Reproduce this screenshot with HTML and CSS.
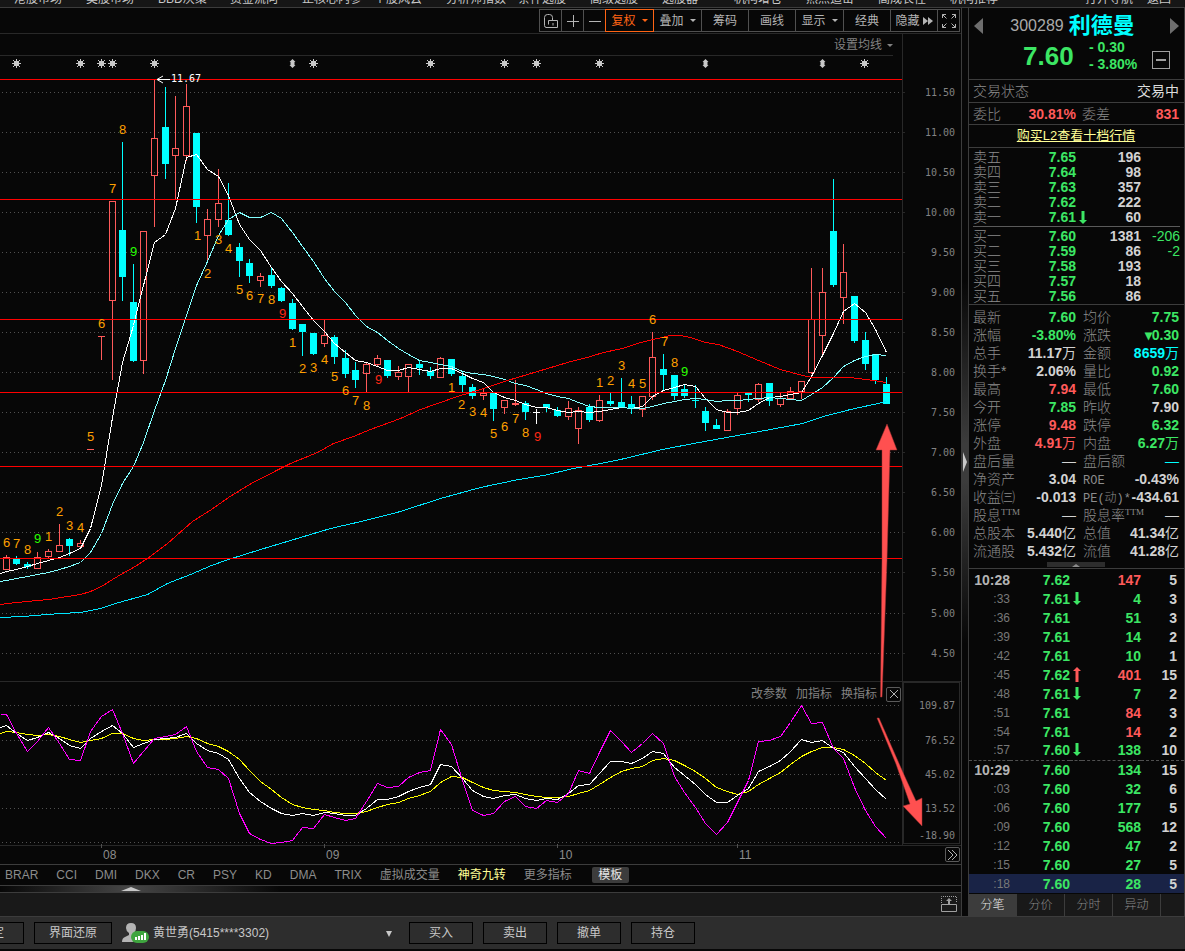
FILE: index.html
```
<!DOCTYPE html>
<html lang="zh-CN">
<head>
    <meta charset="utf-8">
    <title>利德曼 300289</title>
    <link rel="stylesheet" href="styles.css">
</head>
<body>
    <nav class="menu">
        <a href="#">港股市场</a>
        <a href="#">美股市场</a>
        <a href="#">BBD决策</a>
        <a href="#">资金流向</a>
        <a href="#">正核心内参</a>
        <a href="#">个股风云</a>
        <a href="#">分析师指数</a>
        <a href="#">条件选股</a>
        <a href="#">高级选股</a>
        <a href="#">选股器</a>
        <a href="#">机构增仓</a>
        <a href="#">热点追击</a>
        <a href="#">高成长性</a>
        <a href="#">机构推荐</a>
        <div class="menu-right">
            <a href="#">打开导航</a>
            <a href="#">返回</a>
        </div>
    </nav>

    <div class="workspace">
        <main class="left">
            <div class="toolbar">
                <button class="icon" aria-label="锁定">
                    <svg width="16" height="16"><path d="M3 14.500h11.500v-7H5.500v4M1.500 12.500V4.500q0-3 3-3h2q3 0 3 3V7M10 10v2.500M1.500 12.500q0 2 2 2"/></svg>
                </button>
                <button class="icon" aria-label="放大"><svg width="12" height="12"><path d="M0 6.500h12M6.500 0v12"/></svg></button>
                <button class="icon" aria-label="缩小"><svg width="12" height="12"><path d="M0 6.500h12"/></svg></button>
                <button class="drop active">复权<i></i></button>
                <button class="drop">叠加<i></i></button>
                <button>筹码</button>
                <button>画线</button>
                <button class="drop">显示<i></i></button>
                <button>经典</button>
                <button>隐藏<svg class="ff" width="10" height="8"><path d="M0 0l5 4l-5 4zM5 0l5 4l-5 4z"/></svg></button>
                <button class="icon" aria-label="全屏">
                    <svg width="14" height="14"><path d="M.5 4V.5H4M.5 .5l4 4M10 .5h3.500V4M13.500 .5l-4 4M.5 10v3.500H4M.5 13.500l4-4M10 13.500h3.500V10M13.500 13.500l-4-4"/></svg>
                </button>
            </div>

            <div class="chart-wrap">
                <svg id="chart" viewBox="0 33 961 831"></svg>
                <button class="ma-setting">设置均线<i></i></button>
                <div class="sub-tools">
                    <a href="#">改参数</a>
                    <a href="#">加指标</a>
                    <a href="#">换指标</a>
                    <button aria-label="关闭"><svg width="8" height="8"><path d="M0 0l8 8M8 0l-8 8"/></svg></button>
                </div>
                <button class="more-dates" aria-label="更多"><svg width="11" height="10"><path d="M1 0l5 5l-5 5M5 0l5 5l-5 5"/></svg></button>
            </div>

            <div class="indicators">
                <a href="#">BRAR</a>
                <a href="#">CCI</a>
                <a href="#">DMI</a>
                <a href="#">DKX</a>
                <a href="#">CR</a>
                <a href="#">PSY</a>
                <a href="#">KD</a>
                <a href="#">DMA</a>
                <a href="#">TRIX</a>
                <a href="#">虚拟成交量</a>
                <a href="#" class="active">神奇九转</a>
                <a href="#">更多指标</a>
                <button>模板</button>
            </div>
            <div class="fold"><svg width="20" height="4"><path d="M10 0l10 4H0z"/></svg></div>
            <div class="dock">
                <svg width="17" height="17">
                    <path d="M1.500 8.500h15v7h-15z"/>
                    <path d="M1.500 7V.5h15V7" stroke-dasharray="1 1"/>
                    <path class="solid" d="M9 2l3 3h-2v3h-2V5H6z"/>
                </svg>
            </div>
        </main>

        <div class="splitter"><svg width="4" height="20"><path d="M0 0l4 10l-4 10z"/></svg></div>

        <aside class="quote">
            <header class="stock">
                <button class="step" aria-label="上一只"><svg width="9" height="16"><path d="M9 0v16L0 8z"/></svg></button>
                <div class="stock-main">
                    <div class="stock-title"><span class="code">300289</span> <span class="name">利德曼</span></div>
                    <div class="stock-price">
                        <span class="last">7.60</span>
                        <span class="change">- 0.30<br>- 3.80%</span>
                        <button class="minus" aria-label="收起"></button>
                    </div>
                </div>
                <button class="step" aria-label="下一只"><svg width="9" height="16"><path d="M0 0v16l9-8z"/></svg></button>
            </header>
            <div class="status"><span>交易状态</span><b>交易中</b></div>
            <div class="ratio">
                <span>委比</span><strong>30.81%</strong>
                <span>委差</span><strong>831</strong>
            </div>
            <div class="level2"><a href="#">购买L2查看十档行情</a></div>
            <div class="book">
                <table id="sells"></table>
                <table id="buys"></table>
            </div>
            <div class="info">
                <table id="info"></table>
                <div class="grip"><svg width="8" height="3"><path d="M4 0l4 3H0z"/></svg></div>
            </div>
            <table id="ticks" class="ticks"></table>
            <div class="tabs">
                <button class="active">分笔</button>
                <button>分价</button>
                <button>分时</button>
                <button>异动</button>
            </div>
        </aside>
    </div>

    <footer class="trade">
        <button class="lock">锁定</button>
        <button class="restore">界面还原</button>
        <svg class="avatar" width="28" height="20">
            <path fill="#b4b4b4" d="M9 0q5 0 5 5q0 3-2 5v2l5 2q2 1 2 5H0q0-4 3-5l4-2v-2Q4 8 4 5q0-5 5-5z"/>
            <rect x="9" y="8" width="18" height="12" rx="6" fill="#3fa53f"/>
            <path fill="#fff" d="M13 14h2v3h-2zM16 13h2v4h-2zM19 12h2v5h-2zM22 10h2v7h-2z"/>
        </svg>
        <div class="account">
            <select aria-label="账户"><option>黄世勇(5415****3302)</option></select>
        </div>
        <button>买入</button>
        <button>卖出</button>
        <button>撤单</button>
        <button>持仓</button>
    </footer>
    <div class="ticker"></div>

    <script src="chart.js"></script>
    <script src="quote.js"></script>
</body>
</html>
```
FILE: styles.css
```
* {
    box-sizing: border-box;
}
body {
    margin: 0;
    background: #070707;
    color: #c8c8c8;
    font: 12px/16px "Liberation Sans", "Noto Sans CJK SC", sans-serif;
}
a {
    color: inherit;
    text-decoration: none;
}
button, select {
    font: inherit;
    color: inherit;
    background: none;
    border: 0;
    padding: 0;
}
table {
    border-collapse: collapse;
    table-layout: fixed;
    width: 100%;
}
td {
    padding: 0;
    white-space: nowrap;
}

/* top menu */
.menu {
    display: flex;
    align-items: flex-end;
    height: 8px;
    padding-left: 14px;
    background: #161616;
    border-bottom: 1px solid #3c3c3c;
    overflow: hidden;
}
.menu > a {
    flex: 0 0 72px;
    white-space: nowrap;
}
.menu-right {
    display: flex;
    gap: 14px;
    margin-left: auto;
    padding-right: 14px;
}

.workspace {
    display: flex;
}
.left {
    flex: 1;
    min-width: 0;
    display: flex;
    flex-direction: column;
    border-right: 1px solid #3c3c3c;
}

/* toolbar */
.toolbar {
    display: flex;
    justify-content: flex-end;
    height: 25px;
    padding: 1px 1px 1px 0;
}
.toolbar button {
    display: flex;
    align-items: center;
    justify-content: center;
    width: 48px;
    margin-left: -1px;
    border: 1px solid #505050;
    color: #b4b4b4;
}
.toolbar button.drop {
    width: 49px;
    gap: 6px;
}
.toolbar button.icon {
    width: 23px;
}
.toolbar button.active {
    color: #ff6414;
    border-color: #ff6414;
    z-index: 1;
}
.toolbar svg {
    fill: none;
    stroke: #b4b4b4;
}
.toolbar .ff {
    fill: #b4b4b4;
    stroke: none;
    margin-left: 3px;
}
.drop i, .ma-setting i {
    border: 3px solid transparent;
    border-top-color: currentColor;
    border-bottom: 0;
}

/* chart */
.chart-wrap {
    position: relative;
}
#chart {
    display: block;
    width: 100%;
}
#chart line, #chart polyline, #chart rect {
    shape-rendering: crispEdges;
}
#chart polyline {
    fill: none;
}
.axis {
    font: 10px "DejaVu Sans Mono", monospace;
    fill: #828282;
    text-anchor: end;
}
.date {
    font: 12px "Liberation Sans", sans-serif;
    fill: #8c8c8c;
}
.nine {
    font: 13px "Liberation Sans", sans-serif;
    text-anchor: middle;
}
.peak {
    font: 10px "DejaVu Sans Mono", monospace;
    fill: #fff;
}
.ma-setting {
    position: absolute;
    top: 4px;
    right: 68px;
    display: flex;
    align-items: center;
    gap: 5px;
    color: #828282;
}
.sub-tools {
    position: absolute;
    top: 653px;
    right: 60px;
    display: flex;
    align-items: center;
    gap: 9px;
    color: #828282;
}
.sub-tools button, .more-dates {
    display: flex;
    align-items: center;
    justify-content: center;
    width: 15px;
    height: 15px;
    border: 1px solid #5a5a5a;
    border-radius: 2px;
}
.sub-tools svg, .more-dates svg {
    fill: none;
    stroke: #b4b4b4;
}
.more-dates {
    position: absolute;
    right: 1px;
    bottom: 2px;
}

/* below the chart */
.indicators {
    display: flex;
    align-items: center;
    gap: 18px;
    height: 22px;
    padding-left: 5px;
    border-top: 1px solid #3c3c3c;
    border-bottom: 1px solid #3c3c3c;
    color: #8c8c8c;
    white-space: nowrap;
}
.indicators .active {
    color: #ffff96;
}
.indicators button {
    width: 37px;
    margin-left: 2px;
    background: #3c3c3c;
    color: #e6e6e6;
    border-radius: 2px;
}
.fold {
    height: 6px;
    padding-left: 121px;
    line-height: 0;
    background: linear-gradient(to right, #070707, #464646 130px, #070707 280px);
}
.fold svg, .splitter svg {
    fill: #c8c8c8;
}
.fold svg {
    margin-top: 1px;
}
.dock {
    display: flex;
    flex: 1;
    align-items: center;
    justify-content: flex-end;
    padding-right: 4px;
    background: #191919;
    border-top: 1px solid #3c3c3c;
}
.dock svg {
    fill: none;
    stroke: #a0a0a0;
}
.dock .solid {
    fill: #a0a0a0;
    stroke: none;
}
.splitter {
    display: flex;
    align-items: center;
    width: 6px;
    padding-left: 1px;
    background: linear-gradient(#070707 30%, #3c3c3c 48%, #3c3c3c 52%, #070707 70%);
}

/* quote panel */
.quote {
    width: 217px;
    border-left: 1px solid #3c3c3c;
    border-right: 1px solid #3c3c3c;
    font-size: 14px;
    color: #8c8c8c;
    font-weight: 300;
}
.stock {
    display: flex;
    align-items: flex-start;
    height: 72px;
    padding: 10px 5px 0;
    border-bottom: 1px solid #3c3c3c;
}
.step svg {
    display: block;
    fill: #6e6e6e;
}
.stock-main {
    flex: 1;
}
.stock-title {
    display: flex;
    justify-content: center;
    gap: 5px;
    height: 18px;
    padding-right: 8px;
    line-height: 15px;
    white-space: nowrap;
}
.code {
    font-size: 16px;
    color: #aaa;
    font-weight: 400;
}
.name {
    font-size: 22px;
    font-weight: 700;
    color: #00ffff;
}
.stock-price {
    display: flex;
    align-items: center;
    margin-top: 3px;
    padding-left: 40px;
    font-weight: 700;
    color: #3ce664;
}
.last {
    width: 66px;
    font-size: 26px;
}
.change {
    flex: 1;
    line-height: 17px;
    white-space: nowrap;
}
.minus {
    display: flex;
    align-items: center;
    justify-content: center;
    width: 18px;
    height: 18px;
    margin-top: 7px;
    border: 1px solid #a0a0a0;
}
.minus::before {
    content: "";
    width: 10px;
    height: 2px;
    background: #a0a0a0;
}
.status, .ratio, .level2 {
    display: flex;
    align-items: center;
    height: 22px;
    padding: 0 5px 0 4px;
    border-bottom: 1px solid #3c3c3c;
}
.status, .level2 {
    height: 23px;
}
.status {
    justify-content: space-between;
}
.status b {
    font-weight: 400;
    color: #dcdcdc;
}
.ratio strong {
    flex: 0 0 75px;
    font-weight: 700;
    text-align: right;
    color: #ff5a5a;
}
.ratio strong + span {
    margin-left: 6px;
}
.ratio span + strong:last-child {
    flex: 1;
}
.level2 {
    justify-content: center;
    font-size: 13px;
}
.level2 a {
    color: #ffff96;
    font-weight: 400;
    text-decoration: underline;
}
.num {
    font-weight: 700;
    text-align: right;
}
.num .unit {
    font-weight: 400;
}
.green { color: #3ce664; }
.red { color: #ff5a5a; }
.white { color: #d2d2d2; }
.cyan { color: #00ffff; }

.book {
    padding: 2px 4px 0;
    border-bottom: 1px solid #3c3c3c;
}
.book tr {
    height: 15px;
    line-height: 15px;
}
#sells {
    margin-bottom: 2px;
}
#buys {
    border-top: 2px solid #070707;
    box-shadow: 0 -1px #5a5a5a;
}
.delta {
    font-weight: 400;
    text-align: right;
}
td svg {
    display: block;
    margin-left: 3px;
    fill: currentColor;
}

.info {
    padding: 3px 5px 0 4px;
    border-bottom: 1px solid #3c3c3c;
}
.info tr {
    height: 18px;
    line-height: 18px;
}
.info td:nth-child(3) {
    padding-left: 7px;
}
.latin {
    font-family: "Liberation Mono", "Noto Sans CJK SC", monospace;
    font-size: 12px;
    line-height: 12px;
}
.info sup {
    font: 9px/0 "Liberation Serif", serif;
    vertical-align: 5px;
}
.grip {
    width: 58px;
    height: 5px;
    margin: 2px 0 1px 74px;
    background: #2d2d2d;
    text-align: center;
    line-height: 0;
}
.grip svg {
    margin-top: 1px;
    fill: #8c8c8c;
}

.ticks {
    margin-top: 1px;
}
.ticks tr {
    height: 19px;
    line-height: 18px;
}
.ticks .minute {
    color: #b4b4b4;
    font-weight: 700;
    font-size: 14px;
}
.ticks td:first-child {
    text-align: right;
}
.ticks td:last-child {
    padding-right: 7px;
    text-align: right;
    font-weight: 700;
}
.ticks .second {
    font-size: 12px;
    font-weight: 400;
    color: #787878;
}
.ticks tr.split {
    border-top: 1px dashed #505050;
}
.ticks tr.current {
    background: #192346;
}
.tabs {
    display: flex;
    height: 22px;
    margin-top: 1px;
    background: #191919;
}
.tabs button {
    width: 48px;
    border-right: 1px solid #3c3c3c;
    font-size: 12px;
}
.tabs .active {
    background: #3c3c3c;
    color: #e6e6e6;
}

/* trading bar */
.trade {
    display: flex;
    align-items: center;
    gap: 10px;
    height: 33px;
    background: #2d2d2d;
    border-top: 1px solid #3c3c3c;
    overflow: hidden;
}
.trade button {
    flex: 0 0 64px;
    height: 22px;
    border: 1px solid #000;
}
.trade .lock {
    margin-left: -40px;
}
.trade .restore {
    flex-basis: 78px;
}
.avatar {
    margin-right: -7px;
}
.account {
    position: relative;
    width: 241px;
    margin-right: 5px;
}
.account select {
    appearance: none;
    width: 100%;
}
.account::after {
    content: "";
    position: absolute;
    top: 6px;
    right: 2px;
    border: 3px solid transparent;
    border-top: 6px solid #c8c8c8;
    border-bottom: 0;
}
.ticker {
    height: 3px;
    background: #070707;
}
```
FILE: chart.js
```
const svg = document.getElementById('chart');
const RED = '#ff5a5a', CYAN = '#00ffff';
let out = '';

const barX = i => Math.floor(6 + i * 10.605);

function line(x1, y1, x2, y2, color, extra = '') {
    out += `<line x1="${x1}" y1="${y1}" x2="${x2}" y2="${y2}" stroke="${color}" ${extra}/>`;
}
function text(x, y, str, cls, color) {
    out += `<text x="${x}" y="${y}" class="${cls}"${color ? ` fill="${color}"` : ''}>${str}</text>`;
}
function curve(points, color) {
    out += `<polyline points="${points.map(p => `${p[0] + 0.5},${p[1] + 0.5}`).join(' ')}" stroke="${color}"/>`;
}
// one value per bar, the first one sits on the left edge
function series(values, color) {
    curve(values.map((y, i) => [i ? barX(i - 1) : 0, y]), color);
}

// frame
line(0, 33.5, 961, 33.5, '#282828');
line(0, 55.5, 893, 55.5, '#282828');
line(902.5, 33, 902.5, 845, '#282828');
line(0, 681.5, 961, 681.5, '#282828');
line(0, 845.5, 961, 845.5, '#282828');
out += '<rect x="903.5" y="682.5" width="56" height="161" fill="none" stroke="#282828"/>';

// price grid
[92, 132, 172, 212, 252, 292, 332, 372, 412, 452, 492, 532, 572, 613, 653].forEach((y, i) => {
    line(2, y + 0.5, 901, y + 0.5, '#505050', 'stroke-dasharray="1 3"');
    line(902, y + 0.5, 905, y + 0.5, '#282828');
    text(955, y + 4, (11.5 - i * 0.5).toFixed(2), 'axis');
});
[[705, '109.87'], [740, '76.52'], [774, '45.02'], [808, '13.52'], [842, '-18.90']].forEach(([y, label]) => {
    line(2, y + 0.5, 901, y + 0.5, '#505050', 'stroke-dasharray="1 3"');
    text(955, y === 842 ? 839 : y + 4, label, 'axis');
});
[[101, '08'], [324, '09'], [557, '10'], [737, '11']].forEach(([x, label]) => {
    line(x + 0.5, 844, x + 0.5, 848, '#505050');
    text(x + 2, 859, label, 'date');
});

// [high, body top, body bottom, low, kind]
const bars = [
    [555, 557, 569, 570, 'u'], [556, 559, 564, 565, 'd'], [562, 564, 567, 569, 'd'], [552, 557, 568, 569, 'u'],
    [549, 551, 556, 558, 'u'], [524, 545, 551, 552, 'u'], [538, 539, 546, 556, 'd'], [540, 543, 546, 547, 'u'],
    [449, 449, 449, 449, 'u'], [336, 336, 336, 360, 'u'], [201, 201, 300, 380, 'u'], [142, 230, 277, 301, 'd'],
    [264, 302, 361, 362, 'd'], [231, 231, 360, 374, 'u'], [80, 138, 175, 227, 'u'], [87, 127, 164, 179, 'd'],
    [96, 148, 155, 199, 'u'], [84, 106, 155, 161, 'u'], [133, 133, 207, 223, 'd'], [209, 219, 235, 260, 'u'],
    [169, 203, 219, 227, 'u'], [183, 220, 235, 236, 'd'], [243, 247, 261, 277, 'd'], [259, 263, 276, 283, 'd'],
    [273, 276, 280, 287, 'u'], [267, 275, 286, 288, 'd'], [287, 288, 301, 302, 'd'], [299, 303, 329, 330, 'd'],
    [324, 324, 332, 356, 'd'], [333, 333, 354, 355, 'd'], [320, 335, 343, 347, 'u'], [335, 337, 357, 364, 'd'],
    [350, 358, 374, 378, 'd'], [362, 370, 380, 388, 'd'], [363, 364, 373, 392, 'u'], [355, 358, 364, 367, 'u'],
    [360, 360, 376, 378, 'd'], [366, 372, 376, 380, 'u'], [364, 364, 376, 392, 'u'], [360, 364, 368, 375, 'd'],
    [367, 371, 376, 379, 'd'], [357, 358, 377, 378, 'u'], [359, 359, 374, 376, 'd'], [371, 376, 385, 392, 'd'],
    [384, 387, 396, 399, 'd'], [388, 393, 395, 400, 'u'], [393, 393, 409, 421, 'd'], [400, 400, 407, 414, 'u'],
    [380, 403, 404, 406, 'u'], [401, 403, 412, 420, 'd'], [409, 412, 412, 424, 'w'], [404, 404, 408, 412, 'd'],
    [407, 410, 416, 417, 'd'], [401, 408, 416, 420, 'u'], [407, 410, 428, 444, 'u'], [404, 407, 420, 422, 'd'],
    [395, 400, 420, 422, 'u'], [393, 401, 404, 406, 'd'], [378, 402, 407, 408, 'd'], [396, 404, 408, 414, 'd'],
    [396, 396, 409, 417, 'u'], [332, 357, 396, 400, 'u'], [354, 369, 375, 390, 'd'], [375, 375, 396, 400, 'd'],
    [385, 389, 396, 398, 'd'], [385, 400, 401, 408, 'd'], [407, 411, 423, 431, 'd'], [419, 425, 429, 429, 'd'],
    [409, 411, 430, 431, 'u'], [393, 395, 408, 415, 'u'], [393, 393, 395, 402, 'd'], [383, 384, 399, 402, 'u'],
    [383, 383, 401, 406, 'd'], [393, 398, 404, 407, 'u'], [387, 391, 398, 399, 'u'], [381, 381, 391, 399, 'u'],
    [268, 319, 372, 374, 'u'], [268, 292, 335, 354, 'u'], [179, 231, 285, 287, 'd'], [244, 272, 297, 324, 'u'],
    [296, 296, 341, 343, 'd'], [332, 340, 364, 370, 'd'], [354, 354, 380, 384, 'd'], [377, 384, 404, 404, 'd']
];
bars.forEach(([high, top, bottom, low, kind], i) => {
    const x = barX(i);
    const color = { u: RED, d: CYAN, w: '#fff' }[kind];
    if (top === bottom) {
        line(x - 3, top + 0.5, x + 4, top + 0.5, color);
        line(x + 0.5, high, x + 0.5, low, color);
    } else if (kind === 'd') {
        line(x + 0.5, high, x + 0.5, low, color);
        out += `<rect x="${x - 3}" y="${top}" width="7" height="${bottom - top}" fill="${color}"/>`;
    } else {
        line(x + 0.5, high, x + 0.5, top, color);
        line(x + 0.5, bottom, x + 0.5, low, color);
        out += `<rect x="${x - 2.5}" y="${top + 0.5}" width="6" height="${bottom - top}" fill="none" stroke="${color}"/>`;
    }
});

// moving averages
series([573, 571, 569, 566, 563, 560, 557, 553, 548, 528, 485, 417, 362, 325, 285, 242, 234, 208, 157, 154, 169,
    176, 195, 224, 239, 250, 267, 281, 293, 306, 320, 331, 343, 352, 360, 362, 366, 370, 370, 367, 369, 371, 368,
    368, 373, 378, 382, 392, 397, 400, 404, 407, 407, 410, 412, 411, 412, 411, 409, 407, 408, 406, 396, 390, 387,
    384, 386, 398, 409, 412, 412, 410, 403, 397, 396, 394, 392, 376, 355, 333, 311, 303, 312, 329, 352], '#fff');
series([581, 580, 578, 576, 574, 572, 569, 566, 562, 552, 533, 504, 483, 466, 442, 410, 380, 348, 315, 285, 261,
    235, 219, 212, 217, 217, 212, 218, 232, 246, 261, 278, 291, 302, 315, 326, 332, 340, 348, 354, 360, 362, 364,
    366, 371, 373, 374, 376, 379, 383, 385, 389, 393, 396, 398, 402, 406, 407, 407, 407, 408, 408, 406, 403, 401,
    399, 398, 399, 401, 400, 400, 399, 398, 397, 398, 399, 400, 394, 387, 377, 366, 360, 356, 354, 355], '#82ffff');
curve([[0, 604], [16, 602], [48, 599], [80, 594], [90, 591], [101, 586], [112, 579], [122, 573], [133, 567], [147, 558],
    [167, 543], [192, 521], [211, 509], [228, 497], [249, 484], [278, 469], [290, 463], [317, 452], [333, 443],
    [353, 436], [370, 429], [400, 418], [420, 409], [437, 403], [457, 396], [483, 388], [507, 380], [537, 371],
    [567, 362], [590, 356], [603, 352], [622, 348], [640, 342], [657, 338], [670, 335], [680, 335], [690, 337],
    [705, 342], [718, 344], [737, 351], [758, 360], [780, 369], [802, 375], [812, 377], [850, 377], [873, 380],
    [886, 382]], '#ff0000');
curve([[0, 617], [22, 616], [60, 613], [80, 612], [100, 608], [115, 603], [147, 594], [167, 583], [190, 574],
    [211, 565], [228, 559], [260, 549], [300, 537], [330, 528], [365, 520], [400, 511], [440, 498], [480, 487],
    [518, 479], [543, 475], [573, 468], [600, 463], [620, 459], [662, 449], [693, 443], [737, 435], [770, 429],
    [802, 423], [823, 416], [850, 409], [873, 404], [886, 401]], '#00e6ff');

[79, 199, 319, 392, 466, 558].forEach(y => line(0, y + 0.5, 902, y + 0.5, '#ff0000'));

// magic nine counts
[
    '6 6 547', '7 16 548', '8 27 554', '9g 37 543', '1 48 541', '2 59 516', '3 69 530', '4 80 532', '5 90 441',
    '6 101 328', '7 112 193', '8 122 134', '9g 133 256', '1 197 240', '2 207 278', '3 218 244', '4 228 253',
    '5 239 294', '6 249 300', '7 260 303', '8 271 304', '9r 282 318', '1 292 347', '2 302 373', '3 313 372',
    '4 324 364', '5 334 381', '6 345 395', '7 355 405', '8 366 410', '9r 378 384', '1 451 392', '2 461 409',
    '3 472 416', '4 483 417', '5 493 438', '6 504 431', '7 515 423', '8 525 437', '9r 537 441', '1 599 387',
    '2 610 385', '3 621 370', '4 631 388', '5 642 388', '6 652 324', '7 664 346', '8 674 367', '9g 684 376'
].forEach(item => {
    const [label, x, y] = item.split(' ');
    const color = { g: '#28ff00', r: '#ff2814' }[label[1]] || '#ffa000';
    text(+x + 0.5, y, label[0], 'nine', color);
});

// event marks above the bars
[16, 80, 101, 112, 154, 313, 430, 504, 536, 599, 864].forEach(x => {
    out += `<path d="M${x - 4} 63.5h9M${x + 0.5} 59v9M${x - 3} 60l7 7M${x + 4} 60l-7 7" stroke="#c8c8c8"/>` +
        `<rect x="${x - 2}" y="61" width="5" height="5" fill="#c8c8c8"/>`;
});
[292, 705, 822].forEach(x => {
    out += `<path d="M${x + 0.5} 59l3 3h-1v3h1l-3 3l-3-3h1v-3h-1z" fill="#c8c8c8"/>`;
});

out += '<path d="M170 79.5H157M163 76l-6 3.500l6 3.500" fill="none" stroke="#fff"/>';
text(171, 82, '11.67', 'peak');

// oscillator
series([733, 731, 732, 734, 735, 734, 736, 739, 742, 740, 738, 733, 733, 738, 740, 739, 739, 738, 736, 738, 743,
    746, 751, 759, 770, 781, 789, 797, 804, 807, 809, 810, 812, 813, 813, 811, 807, 804, 802, 798, 795, 791, 782,
    776, 777, 782, 787, 790, 791, 792, 794, 796, 797, 797, 796, 793, 790, 784, 777, 771, 768, 766, 760, 758, 760,
    765, 771, 778, 787, 791, 794, 791, 784, 778, 772, 764, 756, 751, 747, 747, 749, 755, 763, 772, 780], '#ffff00');
series([727, 725, 733, 740, 737, 732, 738, 745, 748, 738, 731, 725, 733, 747, 743, 739, 738, 737, 733, 743, 750,
    753, 759, 778, 792, 801, 808, 813, 815, 813, 815, 812, 813, 815, 815, 808, 799, 799, 796, 791, 787, 784, 764,
    766, 778, 790, 796, 798, 795, 794, 798, 800, 798, 799, 793, 785, 784, 773, 761, 761, 763, 758, 751, 753, 767,
    775, 784, 794, 802, 802, 795, 788, 771, 766, 760, 751, 739, 742, 740, 748, 752, 766, 778, 789, 799], '#fff');
series([714, 714, 733, 751, 741, 727, 743, 759, 760, 731, 716, 709, 733, 763, 751, 738, 736, 734, 726, 751, 767,
    769, 778, 813, 833, 839, 843, 842, 840, 827, 828, 814, 817, 820, 818, 801, 783, 787, 786, 777, 772, 770, 729,
    744, 780, 810, 815, 813, 801, 796, 806, 808, 800, 802, 793, 770, 773, 752, 730, 741, 752, 743, 733, 743, 776,
    792, 807, 823, 834, 822, 802, 780, 741, 740, 736, 722, 705, 723, 722, 748, 758, 787, 810, 826, 838], '#ff00ff');

// drawn arrows
out += '<path fill="#ff5050" stroke="#a03232" stroke-width=".5" d="M887 424L897 450H890L887 560L882 697H880.500L882 560V450H876z"/>';
out += '<path fill="#ff5050" stroke="#a03232" stroke-width=".5" d="M879 718L905 777L916 801L922 798V826L903 806L910 804L896 764L877 718z"/>';

svg.innerHTML = out;
```
FILE: quote.js
```
const arrowDown = '<svg width="8" height="14"><path d="M2.500 0h3v9H8l-4 4l-4-4h2.500z"/></svg>';
const arrowUp = '<svg class="red" width="8" height="15"><path d="M2.500 15h3V4H8L4 0L0 4h2.500z"/></svg>';

function fill(id, widths, rows) {
    const cols = widths.map(w => `<col width="${w}">`).join('');
    document.getElementById(id).innerHTML = `<colgroup>${cols}<col></colgroup><tbody>${rows.join('')}</tbody>`;
}

// label, price, volume, delta, arrow
const bookRow = ([label, price, volume, delta = '', arrow = '']) =>
    `<tr><td>${label}</td><td class="num green">${price}</td><td class="green">${arrow}</td>` +
    `<td class="num white">${volume}</td><td class="delta green">${delta}</td></tr>`;

fill('sells', [42, 61, 12, 53], [
    ['卖五', '7.65', 196], ['卖四', '7.64', 98], ['卖三', '7.63', 357], ['卖二', '7.62', 222],
    ['卖一', '7.61', 60, '', arrowDown]
].map(bookRow));
fill('buys', [42, 61, 12, 53], [
    ['买一', '7.60', 1381, '-206'], ['买二', '7.59', 86, '-2'], ['买三', '7.58', 193],
    ['买四', '7.57', 18], ['买五', '7.56', 86]
].map(bookRow));

const value = (str, color) =>
    `<td class="num ${color}">${str.replace(/[万亿—]/, '<span class="unit">$&</span>')}</td>`;

fill('info', [42, 61, 51], [
    ['最新', '7.60', 'green', '均价', '7.75', 'green'],
    ['涨幅', '-3.80%', 'green', '涨跌', '▾0.30', 'green'],
    ['总手', '11.17万', 'white', '金额', '8659万', 'cyan'],
    ['换手*', '2.06%', 'white', '量比', '0.92', 'green'],
    ['最高', '7.94', 'red', '最低', '7.60', 'green'],
    ['今开', '7.85', 'green', '昨收', '7.90', 'white'],
    ['涨停', '9.48', 'red', '跌停', '6.32', 'green'],
    ['外盘', '4.91万', 'red', '内盘', '6.27万', 'green'],
    ['盘后量', '—', 'white', '盘后额', '—', 'cyan'],
    ['净资产', '3.04', 'white', '<span class="latin">ROE</span>', '-0.43%', 'white'],
    ['收益㈢', '-0.013', 'white', '<span class="latin">PE(动)*</span>', '-434.61', 'white'],
    ['股息<sup>TTM</sup>', '—', 'white', '股息率<sup>TTM</sup>', '—', 'white'],
    ['总股本', '5.440亿', 'white', '总值', '41.34亿', 'white'],
    ['流通股', '5.432亿', 'white', '流值', '41.28亿', 'white']
].map(r => `<tr><td>${r[0]}</td>${value(r[1], r[2])}<td>${r[3]}</td>${value(r[4], r[5])}</tr>`));

const ticks = [
    ['10:28', '7.62', '', 147, 'red', 5], [':33', '7.61', arrowDown, 4, 'green', 3],
    [':36', '7.61', '', 51, 'green', 3], [':39', '7.61', '', 14, 'green', 2],
    [':42', '7.61', '', 10, 'green', 1], [':45', '7.62', arrowUp, 401, 'red', 15],
    [':48', '7.61', arrowDown, 7, 'green', 2], [':51', '7.61', '', 84, 'red', 3],
    [':54', '7.61', '', 14, 'red', 2], [':57', '7.60', arrowDown, 138, 'green', 10],
    ['10:29', '7.60', '', 134, 'green', 15], [':03', '7.60', '', 32, 'green', 6],
    [':06', '7.60', '', 177, 'green', 5], [':09', '7.60', '', 568, 'green', 12],
    [':12', '7.60', '', 47, 'green', 2], [':15', '7.60', '', 27, 'green', 5],
    [':18', '7.60', '', 28, 'green', 5]
];
fill('ticks', [41, 60, 12, 59], ticks.map(([time, price, arrow, volume, color, count], i) => {
    const rowClass = i === 10 ? 'split' : i === ticks.length - 1 ? 'current' : '';
    return `<tr class="${rowClass}"><td class="${time[0] === ':' ? 'second' : 'minute'}">${time}</td>` +
        `<td class="num green">${price}</td><td class="green">${arrow}</td>` +
        `<td class="num ${color}">${volume}</td><td class="white">${count}</td></tr>`;
}));
```
